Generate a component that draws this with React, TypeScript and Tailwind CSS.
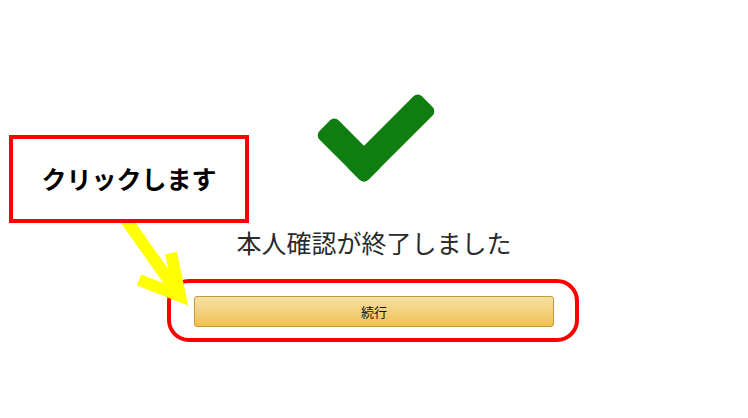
export default function App(): JSX.Element {
  return (
    <div className="relative h-[418px] w-[748px] overflow-hidden bg-white font-['Noto_Sans_CJK_JP',sans-serif]">
      <div className="flex flex-col items-center pt-[90px]">
        <svg width="130" height="100" viewBox="0 0 130 100">
          <g transform="translate(55 94) rotate(45)" fill="#0f7d0f">
            <rect x="-27" y="-103" width="27" height="103" rx="6" />
            <rect x="-69" y="-27" width="69" height="27" rx="6" />
          </g>
        </svg>
        <p className="mt-[36px] text-[25px] leading-[32px] text-[#2a2a2a]">
          本人確認が終了しました
        </p>
        <button className="mt-[38px] h-[31px] w-[360px] rounded-[3px] border border-[#bf9b3a] bg-linear-to-b from-[#f7dfa5] to-[#f0c14b] text-[13px] text-[#111]">
          続行
        </button>
      </div>

      {/* annotations */}
      <div className="absolute left-[167px] top-[279px] h-[63px] w-[412px] rounded-[22px] border-4 border-[#ff0000]" />
      <svg
        className="absolute left-[100px] top-[200px]"
        width="100"
        height="120"
        viewBox="100 200 100 120"
      >
        <g fill="none" stroke="#ffff00" strokeWidth="12" strokeLinejoin="miter">
          <path d="M112 200 L180 296" />
          <path d="M171 253 L180 296 L139 280" />
        </g>
      </svg>
      <div className="absolute left-[9px] top-[135px] flex h-[88px] w-[240px] items-center justify-center border-4 border-[#ff0000] bg-white">
        <span className="text-[25px] font-bold text-black">クリックします</span>
      </div>
    </div>
  );
}
